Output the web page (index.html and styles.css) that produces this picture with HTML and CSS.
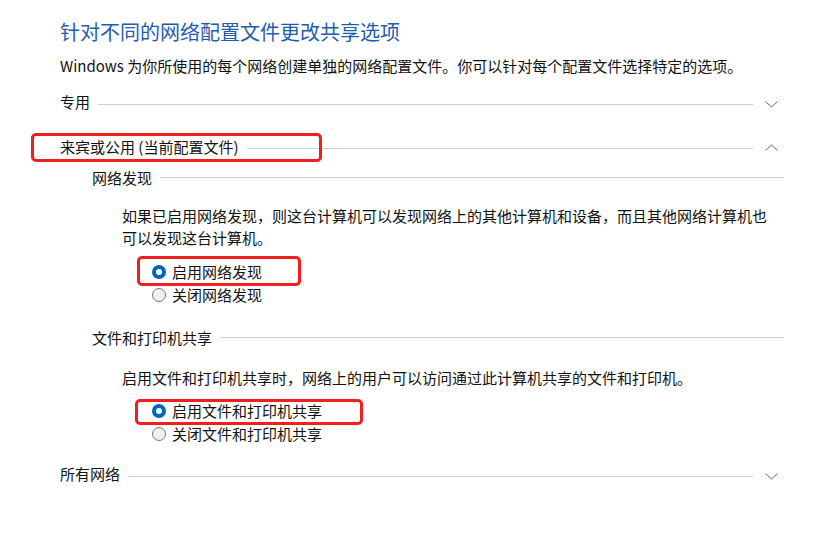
FILE: index.html
```html
<!DOCTYPE html>
<html lang="zh-CN">
<head>
<meta charset="utf-8">
<title>高级共享设置</title>
<link rel="stylesheet" href="styles.css">
</head>
<body>
<div class="page">
  <h1 class="title">针对不同的网络配置文件更改共享选项</h1>
  <p class="intro">Windows 为你所使用的每个网络创建单独的网络配置文件。你可以针对每个配置文件选择特定的选项。</p>

  <div class="group-row row-private">
    <span class="label">专用</span>
    <span class="rule"></span>
    <span class="chev"><svg width="13" height="7" viewBox="0 0 13 7"><polyline points="0.5,0.5 6.5,6 12.5,0.5" fill="none" stroke="#6a6a6a" stroke-width="1"/></svg></span>
  </div>

  <div class="group-row row-guest">
    <span class="label">来宾或公用 (当前配置文件)</span>
    <span class="rule"></span>
    <span class="chev"><svg width="13" height="7" viewBox="0 0 13 7"><polyline points="0.5,6.5 6.5,1 12.5,6.5" fill="none" stroke="#6a6a6a" stroke-width="1"/></svg></span>
  </div>

  <div class="section">
    <div class="sub-row sub-first">
      <span class="label">网络发现</span>
      <span class="rule"></span>
    </div>
    <p class="desc">如果已启用网络发现，则这台计算机可以发现网络上的其他计算机和设备，而且其他网络计算机也<br>可以发现这台计算机。</p>
    <div class="options">
      <label class="option"><span class="radio checked"></span>启用网络发现</label>
      <label class="option"><span class="radio"></span>关闭网络发现</label>
    </div>

    <div class="sub-row sub-second">
      <span class="label">文件和打印机共享</span>
      <span class="rule"></span>
    </div>
    <p class="desc desc-single">启用文件和打印机共享时，网络上的用户可以访问通过此计算机共享的文件和打印机。</p>
    <div class="options options-second">
      <label class="option"><span class="radio checked"></span>启用文件和打印机共享</label>
      <label class="option"><span class="radio"></span>关闭文件和打印机共享</label>
    </div>
  </div>

  <div class="group-row row-all">
    <span class="label">所有网络</span>
    <span class="rule"></span>
    <span class="chev"><svg width="13" height="7" viewBox="0 0 13 7"><polyline points="0.5,0.5 6.5,6 12.5,0.5" fill="none" stroke="#6a6a6a" stroke-width="1"/></svg></span>
  </div>

  <div class="mark mark-1"></div>
  <div class="mark mark-2"></div>
  <div class="mark mark-3"></div>
</div>
</body>
</html>
```

FILE: styles.css
```css
html, body {
  margin: 0;
  padding: 0;
  background: #ffffff;
}

body {
  font-family: "Noto Sans CJK SC", "Microsoft YaHei", "Noto Sans", sans-serif;
  font-size: 15px;
  color: #111111;
}

.page {
  position: relative;
  width: 724px;
  height: 548px;
  padding: 18px 40px 0 60px;
  box-sizing: content-box;
}

.title {
  margin: 0;
  font-size: 20px;
  font-weight: 400;
  line-height: 28px;
  color: #1f5cad;
}

.intro {
  margin: 9px 0 0 0;
  line-height: 22px;
}

.group-row,
.sub-row {
  display: flex;
  align-items: center;
  height: 22px;
  line-height: 22px;
}

.label {
  white-space: nowrap;
}

.rule {
  flex: 1;
  height: 0;
  border-top: 1px solid #d0d0d0;
  margin-left: 8px;
  position: relative;
  top: 2px;
}

.chev {
  width: 31px;
  display: flex;
  justify-content: center;
  padding-left: 6px;
  box-sizing: border-box;
  position: relative;
  top: 2px;
}

.chev svg {
  display: block;
}

.row-private { margin-top: 14px; }
.row-guest { margin-top: 23px; }
.row-guest .rule { top: 1px; }
.row-guest .chev { top: 0; }
.row-all { margin-top: 18px; }

.section {
  padding-left: 32px;
}

.sub-row .rule { top: -1px; }
.sub-first { margin-top: 9px; }
.sub-second { margin-top: 21px; }

.desc {
  margin: 16px 0 0 30px;
  line-height: 22px;
}

.desc-single { margin-top: 18px; }

.options {
  margin: 11px 0 0 60px;
  display: flex;
  flex-direction: column;
}

.options-second { margin-top: 10px; }

.option {
  display: flex;
  align-items: center;
  height: 23px;
  line-height: 23px;
}

.radio {
  width: 14px;
  height: 14px;
  border-radius: 50%;
  box-sizing: border-box;
  border: 1px solid #7a7a7a;
  background: #f0f0f0;
  margin-right: 6px;
}

.radio.checked {
  border: 4px solid #0065bd;
  background: #ffffff;
}

.mark {
  position: absolute;
  border: 3px solid #f01e1e;
  border-radius: 5px;
  box-sizing: border-box;
}

.mark-1 { left: 31px; top: 133px; width: 291px; height: 29px; }
.mark-2 { left: 137px; top: 256px; width: 164px; height: 30px; }
.mark-3 { left: 135px; top: 399px; width: 228px; height: 26px; }
```
